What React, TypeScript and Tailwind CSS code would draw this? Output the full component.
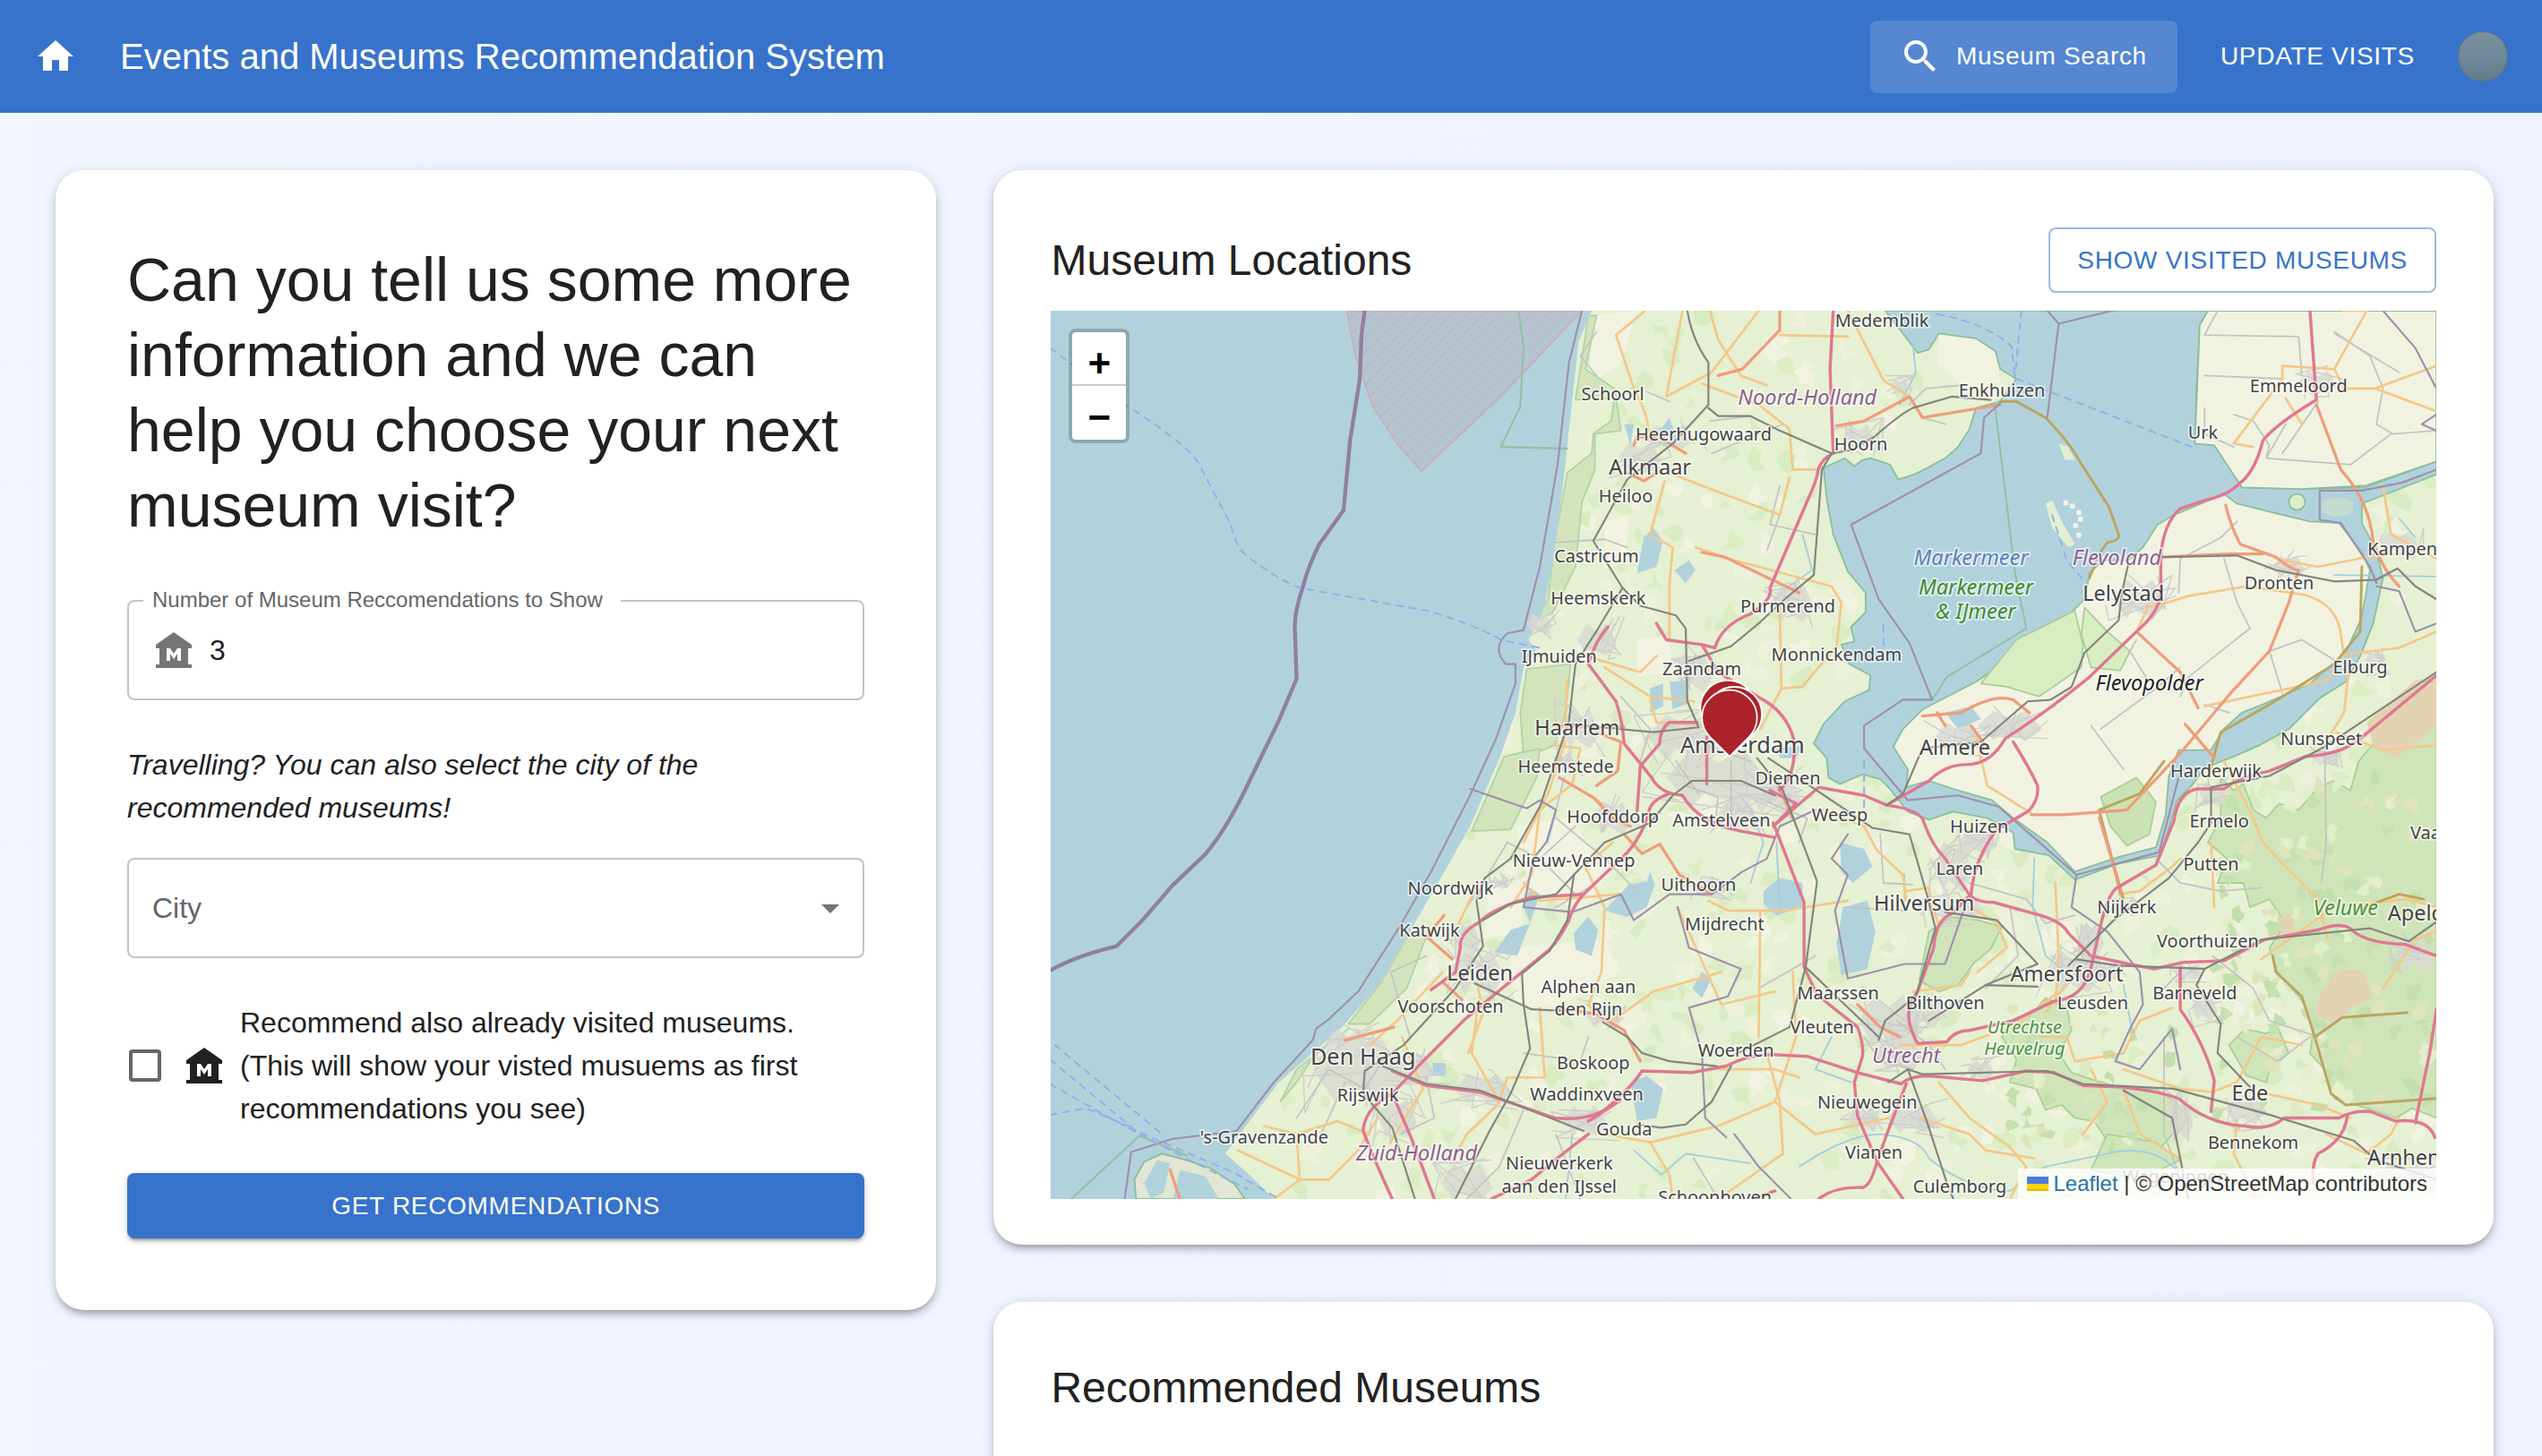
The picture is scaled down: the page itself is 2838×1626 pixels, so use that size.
import { useId, useState } from "react";
import type { ReactNode } from "react";

const SANS = "font-['Liberation_Sans',Arial,sans-serif]";

type IconProps = { d: string; className?: string };

function Icon({ d, className = "" }: IconProps) {
  return (
    <svg viewBox="0 0 24 24" aria-hidden="true" className={`size-12 shrink-0 fill-current ${className}`}>
      <path d={d} />
    </svg>
  );
}

const HOME = "M10 20v-6h4v6h5v-8h3L12 3 2 12h3v8z";
const SEARCH =
  "M15.5 14h-.79l-.28-.27C15.41 12.59 16 11.11 16 9.5 16 5.91 13.09 3 9.5 3S3 5.91 3 9.5 5.91 16 9.5 16c1.61 0 3.09-.59 4.23-1.57l.27.28v.79l5 4.99L20.49 19l-4.99-5zm-6 0C7.01 14 5 11.99 5 9.5S7.01 5 9.5 5 14 7.01 14 9.5 11.99 14 9.5 14z";
const MUSEUM =
  "M22 11V9L12 2 2 9v2h2v9H2v2h20v-2h-2v-9h2zm-6 7h-2v-4l-2 3-2-3v4H8v-7h2l2 3 2-3h2v7z";
const ARROW_DOWN = "M7 10l5 5 5-5z";

function Card({ children, className = "" }: { children: ReactNode; className?: string }) {
  return (
    <section
      className={`rounded-[32px] bg-white shadow-[0_6px_6px_-4px_rgba(0,0,0,0.2),0_6px_8px_rgba(0,0,0,0.14),0_2px_16px_rgba(0,0,0,0.12)] ${className}`}
    >
      {children}
    </section>
  );
}

function TopBar() {
  return (
    <header className="flex h-[126px] shrink-0 items-center bg-[#3873cb] pr-[38px] pl-[38px] text-white">
      <a href="#home" aria-label="Home">
        <Icon d={HOME} />
      </a>
      <h1 className="ml-12 flex-1 text-[40px] leading-[64px]">Events and Museums Recommendation System</h1>
      <label className="flex h-[81px] items-center gap-4 rounded-lg bg-white/15 px-8">
        <Icon d={SEARCH} />
        <input
          type="text"
          aria-label="Museum Search"
          placeholder="Museum Search"
          className="w-[215px] bg-transparent text-[28px] tracking-wide outline-none placeholder:text-white"
        />
      </label>
      <button type="button" className="mr-8 ml-8 px-4 text-[28px] tracking-wide uppercase">
        Update visits
      </button>
      <button
        type="button"
        aria-label="Account"
        className="size-14 rounded-full border border-[#5f7684] bg-linear-to-b from-[#7d909b] via-[#6d8a9c] to-[#667a87]"
      />
    </header>
  );
}

function PreferencesForm() {
  const id = useId();
  const [count, setCount] = useState("3");
  const [includeVisited, setIncludeVisited] = useState(false);

  return (
    <Card className="p-20 text-[32px] leading-[48px]">
      <form onSubmit={(e) => e.preventDefault()}>
        <h2 className="text-[68px] leading-[84px]">
          Can you tell us some more information and we can help you choose your next museum visit?
        </h2>

        <div className="relative mt-16 flex h-28 items-center gap-4 rounded-lg border-2 border-[#c4c4c4] px-[26px]">
          <label
            htmlFor={`${id}-count`}
            className="absolute -top-4 left-4 bg-white pr-5 pl-2.5 text-[24px] leading-[28px] text-[#666]"
          >
            Number of Museum Reccomendations to Show
          </label>
          <Icon d={MUSEUM} className="text-[#757575]" />
          <input
            id={`${id}-count`}
            type="text"
            inputMode="numeric"
            value={count}
            onChange={(e) => setCount(e.target.value)}
            className="w-full min-w-0 flex-1 outline-none"
          />
        </div>

        <p className="mt-12 italic">Travelling? You can also select the city of the recommended museums!</p>

        <div className="relative mt-8 h-28">
          <select
            aria-label="City"
            defaultValue=""
            className="h-full w-full appearance-none rounded-lg border-2 border-[#c4c4c4] px-[26px] text-[#666] outline-none"
          >
            <option value="">City</option>
          </select>
          <Icon d={ARROW_DOWN} className="pointer-events-none absolute top-8 right-[14px] text-[#757575]" />
        </div>

        <label className="mt-12 flex items-center">
          <input
            type="checkbox"
            checked={includeVisited}
            onChange={(e) => setIncludeVisited(e.target.checked)}
            className="ml-0.5 size-9 shrink-0 appearance-none rounded border-4 border-[#666] checked:bg-[#3873cb]"
          />
          <Icon d={MUSEUM} className="ml-6" />
          <span className="ml-4">
            Recommend also already visited museums. (This will show your visted musuems as first recommendations
            you see)
          </span>
        </label>

        <button
          type="submit"
          className="mt-12 h-[73px] w-full rounded-lg bg-[#3873cb] text-[28px] tracking-wide text-white uppercase shadow-[0_6px_2px_-4px_rgba(0,0,0,0.2),0_4px_4px_rgba(0,0,0,0.14),0_2px_10px_rgba(0,0,0,0.12)]"
        >
          Get recommendations
        </button>
      </form>
    </Card>
  );
}

/* ---------- map geometry ---------- */

const MAINLAND =
  "982,192 974,211 970,247 965,293 959,342 952,378 943,395 948,402 940,412 935,440 926,466 907,510 889,542 871,573 853,605 829,633 811,649 789,668 768,696 756,712 772,726 786,740 1503,740 1503,192";
const SOUTH_ISLAND = "701,740 700,728 706,717 717,712 732,716 747,721 762,731 768,740";
const LAKES =
  "1163,192 1174,206 1183,218 1190,216 1196,206 1219,209 1231,217 1234,228 1244,234 1234,248 1219,252 1215,265 1208,276 1200,283 1189,289 1181,293 1171,296 1166,287 1154,283 1149,284 1144,288 1138,283 1125,289 1127,308 1131,330 1140,353 1151,366 1151,378 1142,387 1144,396 1136,398 1141,410 1154,417 1153,426 1138,433 1125,447 1119,459 1127,468 1128,480 1135,484 1149,478 1160,481 1166,487 1177,501 1190,506 1205,501 1226,505 1242,514 1243,524 1264,528 1280,543 1307,533 1333,528 1343,494 1352,485 1360,474 1378,467 1394,460 1412,450 1431,431 1447,421 1456,405 1464,385 1470,357 1466,340 1457,323 1457,311 1503,293 1503,285 1459,301 1419,302 1383,301 1375,288 1366,275 1354,274 1355,240 1357,201 1362,192";
const FLEVOPOLDER =
  "1372,305 1380,311 1400,316 1425,322 1443,323 1457,341 1462,352 1457,381 1447,403 1425,422 1398,434 1383,440 1372,450 1364,463 1344,463 1338,479 1336,503 1330,523 1307,529 1280,538 1263,520 1242,505 1229,494 1205,487 1190,482 1176,486 1177,475 1168,461 1174,450 1186,438 1219,421 1246,402 1274,382 1286,370 1289,354 1297,346 1313,346 1322,338 1331,324 1341,318";
const NORTH_POLDER = "1362,192 1357,201 1354,274 1366,275 1383,301 1419,302 1459,300 1503,285 1503,192";

const FORESTS = [
  "1370,480 1378,488 1384,484 1390,500 1398,505 1406,496 1418,500 1430,486 1440,482 1450,488 1455,470 1470,452 1480,440 1503,420 1503,690 1488,684 1478,690 1460,684 1440,678 1434,660 1425,650 1428,630 1418,615 1405,600 1400,585 1410,570 1400,555 1388,560 1384,545 1368,545 1374,530 1362,520 1370,505",
  "1235,640 1240,630 1255,624 1262,616 1275,622 1278,636 1270,650 1278,662 1290,666 1310,672 1330,672 1342,680 1350,690 1340,700 1330,712 1318,702 1300,704 1292,692 1280,690 1272,682 1262,685 1256,672 1240,668 1244,654",
  "1190,575 1204,566 1220,568 1235,572 1228,586 1218,594 1208,608 1196,612 1184,605",
  "1296,492 1318,480 1330,495 1326,515 1312,522 1302,510",
  "1375,645 1385,635 1398,638 1405,634 1412,650 1400,660 1398,668 1386,664",
  "1265,528 1285,515 1305,520 1308,530 1281,538",
  "1286,375 1300,390 1314,402 1308,414 1290,412 1284,392",
  "1244,395 1280,377 1285,398 1284,412 1258,430 1238,424 1222,422",
  "1300,700 1330,705 1345,716 1320,728 1290,722",
];
const DUNES = [
  "972,247 996,246 994,260 983,268 982,280 967,292 960,330 955,370 947,384 958,378 972,350 976,310 984,290 984,268 1000,266 996,240 978,228 985,195 980,195",
  "942,413 969,410 966,440 959,460 940,468 938,440",
  "928,467 950,462 948,480 932,512 908,513",
  "870,575 880,578 868,610 845,632 832,632 853,605",
  "832,635 812,650 800,668 790,680 800,660",
];
const HEATHS = [
  "1432,612 1444,598 1458,600 1464,616 1450,622 1440,632 1428,626",
  "1460,446 1490,420 1503,418 1503,448 1478,468 1464,460",
  "1406,566 1413,564 1416,574 1408,582",
];
const FIELDS = [
  "985,195 1010,192 1000,225 978,240",
  "990,322 1005,318 1003,345 990,352",
  "935,510 970,505 992,540 978,562 944,552",
  "920,540 940,548 938,575 915,580",
  "1196,206 1219,209 1231,217 1234,236 1215,242 1195,225",
  "1010,395 1030,392 1032,415 1010,418",
  "930,585 990,580 1000,600 960,622 935,620",
];

const TOWNS: [number, number, number, number][] = [
  [1012, 282, 13, 9], [1030, 270, 16, 7], [1147, 270, 10, 8], [1172, 238, 6, 4], [1430, 236, 12, 7],
  [1106, 372, 13, 12], [985, 395, 12, 10], [950, 385, 8, 6], [975, 450, 12, 12], [965, 472, 8, 7],
  [1060, 480, 32, 18], [1040, 455, 24, 14], [1045, 415, 12, 12], [1095, 490, 16, 12], [1072, 503, 12, 10],
  [995, 505, 12, 10], [912, 600, 16, 14], [905, 580, 8, 10], [838, 660, 28, 20], [870, 660, 16, 9],
  [915, 672, 18, 9], [862, 690, 12, 12], [832, 645, 14, 10], [990, 627, 12, 7], [978, 692, 14, 9],
  [905, 730, 16, 12], [1205, 535, 12, 16], [1220, 520, 12, 8], [1208, 560, 16, 8], [1165, 630, 18, 16],
  [1172, 650, 14, 12], [1188, 625, 10, 10], [1180, 690, 16, 9], [1150, 690, 10, 8], [1280, 600, 16, 13],
  [1290, 580, 8, 10], [1320, 370, 16, 12], [1412, 350, 10, 7], [1240, 448, 20, 9], [1208, 455, 14, 9],
  [1480, 335, 12, 7], [1385, 685, 12, 9], [1345, 690, 8, 14], [1360, 622, 8, 8], [1350, 600, 8, 5],
  [1490, 590, 12, 10], [1485, 725, 18, 8], [1312, 560, 9, 6], [1365, 490, 8, 8], [1435, 468, 8, 5],
  [1465, 408, 6, 6], [1222, 660, 8, 6], [925, 545, 6, 4], [1055, 548, 10, 6], [1300, 600, 8, 5],
];

const PONDS = [
  "1005,546 1016,544 1018,538 1021,546 1016,560 1004,566 990,562",
  "1088,550 1098,542 1112,545 1112,560 1096,565 1088,558",
  "1135,520 1150,524 1155,535 1143,545 1136,538",
  "1137,560 1152,556 1157,575 1152,598 1136,602 1133,582",
  "971,576 980,566 986,574 982,590 972,586",
  "1006,668 1016,664 1026,672 1022,690 1010,692",
  "1014,332 1020,326 1026,334 1022,350 1010,354",
  "1018,425 1026,422 1026,436 1018,440",
  "1030,421 1040,420 1042,434 1032,438",
  "1044,610 1050,600 1056,604 1050,616",
  "884,656 892,656 892,664 884,664",
  "1033,352 1042,346 1046,352 1040,360",
  "1200,440 1216,436 1222,444 1208,450",
  "1096,462 1112,460 1108,468 1098,468",
  "1024,266 1030,258 1034,270 1026,276",
  "1002,262 1008,262 1006,275",
  "714,716 722,718 718,736 710,740 706,730",
  "728,722 744,726 752,740 724,740",
  "944,548 950,552 944,570 940,560",
  "932,574 944,570 936,590 922,588",
];

const HIGHWAYS = [
  "M1425,192 L1429,247 Q1404,262 1396,272 Q1391,292 1381,299 Q1374,306 1360,309 L1345,314 Q1334,324 1333,345 L1333,366 Q1332,378 1319,389 L1289,418 Q1262,440 1237,456 Q1228,472 1213,472 Q1200,472 1190,482 L1164,497",
  "M1131,192 L1129,228 L1131,280 Q1122,284 1121,294 L1119,300 L1092,363 Q1094,370 1080,379 Q1062,386 1058,400 L1050,398 L1028,395 L1022,385",
  "M1050,398 L1060,415 L1086,431 Q1103,440 1107,458 Q1108,478 1098,488",
  "M1047,446 L1030,446 Q1024,450 1024,459 L1012,473 L1010,501",
  "M992,387 Q984,396 980,410 L997,433 Q1001,445 1002,459 L1019,480 Q1024,490 1038,491 Q1048,508 1074,513 L1095,517",
  "M1053,455 L1053,484",
  "M1030,490 Q1018,494 1017,502 Q1012,520 998,532 L977,552 Q970,560 968,568 Q962,580 956,586 L939,600 Q912,622 904,629 L877,656 L859,675 L871,703 L885,740",
  "M977,552 L944,554 Q922,560 913,569 Q900,576 901,585 L898,600 L883,611",
  "M859,675 Q842,684 841,698 Q848,716 859,740",
  "M859,661 L880,670 L913,674 L959,690 Q978,692 990,685 Q1006,672 1013,661 L1044,662 L1065,658 Q1080,650 1095,651 L1115,652 L1146,662 L1173,669 Q1178,664 1190,664 L1223,667 L1250,661 L1267,662 L1285,670 L1310,671 Q1334,674 1344,678 Q1362,694 1385,695 Q1400,698 1409,690 L1443,690 Q1452,685 1462,686 L1478,692 Q1498,690 1502,702",
  "M1094,508 L1113,557 L1113,597 L1121,614 L1146,634 Q1150,645 1149,652 L1144,668 L1146,689 L1158,717 Q1154,732 1149,733 Q1132,732 1122,740",
  "M1176,669 L1164,700 L1158,717 L1174,740",
  "M1092,488 L1108,496 L1094,510 L1122,486 L1150,491 L1164,497 Q1186,500 1187,508 Q1192,522 1200,530 L1214,551 Q1218,557 1230,557 L1255,564 Q1272,568 1276,576 L1290,590 L1313,595 L1329,598 L1347,594 L1372,593 L1397,580 L1430,574 Q1446,568 1452,575 Q1460,582 1484,583 L1503,590",
  "M1242,458 Q1252,474 1257,485 Q1258,494 1251,501 L1232,512 Q1218,530 1216,552 L1204,564 Q1194,568 1193,585 L1183,612 Q1172,625 1183,644 L1201,643 Q1206,636 1215,636 L1242,630 L1267,618 Q1286,616 1290,597 L1295,575 Q1300,552 1306,548 L1330,534 L1341,507 Q1344,488 1356,487 L1372,487 Q1380,480 1400,476 L1422,467 Q1444,466 1456,456 L1503,417",
  "M1345,597 L1345,623 Q1360,644 1366,667 L1364,686 M1503,623 L1499,649 L1490,693 M1448,689 Q1446,704 1430,712 Q1426,718 1427,730",
  "M980,700 Q960,715 945,728 L920,740 M980,692 L1000,679",
  "M1082,740 L1095,735",
];

const TRUNKS = [
  "M1429,250 L1444,290 Q1462,310 1464,335 Q1470,352 1480,362",
  "M1373,312 Q1376,325 1382,336 L1404,344 Q1414,352 1418,352 L1412,372 L1400,402 L1376,428 L1345,465 L1312,500 L1273,503 L1253,503",
  "M1334,344 L1375,342 L1396,342",
  "M1318,390 L1345,415 L1356,437 M1348,447 L1366,468",
  "M1295,505 Q1306,540 1308,552",
  "M1098,192 L1098,204 L1075,228 L1060,232",
  "M1133,263 L1150,260 L1178,245 L1186,258 L1234,250",
  "M1008,275 L1010,270 L1024,270 L1040,280 M1004,292 L1014,297 L1026,290",
  "M1050,341 L1064,344 L1110,366",
  "M958,448 L1002,449 M962,480 L984,493 L996,506 L1006,510",
  "M985,452 L1000,458 L998,476 L985,485",
  "M1002,515 L1013,527 L1024,521 L1036,540 L1056,552",
  "M891,565 L880,578 L896,592 M890,606 L902,617",
  "M830,642 L845,638 L860,634 M960,622 L985,626 L1002,636 L1012,655",
  "M1186,442 L1210,440 Q1230,428 1242,432 L1252,440 M1195,440 L1200,448",
  "M1146,620 L1160,634 L1172,640 M1216,448 L1226,462",
  "M722,722 L728,740 M1096,483 L1106,505",
];

const ROADS = [
  "M1015,192 L997,207 L1008,240 Q1020,262 1016,272 M1038,192 L1028,245 L1056,230 L1085,192",
  "M1055,192 L1060,210 L1074,232 L1090,238 M1050,237 L1085,250 L1104,265 L1106,290 L1122,290 M1104,295 L1098,318 L1050,300 L1030,292",
  "M1027,297 L1018,330 L1032,338 L1030,360 L1030,395 M1140,192 L1162,235 L1178,245 M1098,207 L1140,208",
  "M1046,338 L1070,346 L1130,362 L1136,372 L1133,400 M1098,375 L1099,425 L1112,424 L1132,400 M1099,425 L1086,450",
  "M1445,192 L1460,192 L1440,228 L1408,226 L1408,234 L1378,274 L1390,276 M1440,228 L1446,240 L1465,240 L1503,226 M1465,240 L1503,254 M1410,246 L1420,262",
  "M1334,373 L1350,368 L1386,362 L1420,367 Q1442,372 1444,392 L1446,404 L1436,420 L1360,436 M1319,388 L1325,375 L1334,373",
  "M1404,345 L1430,350 L1455,345 L1478,342 M1470,300 L1475,330 L1503,345 M1446,404 L1480,400 L1503,390 M1450,405 L1446,440 L1436,456",
  "M1441,452 L1470,463 L1503,460 M1372,470 L1390,505 L1396,520 L1410,535 L1430,555 L1436,580 M1366,560 L1364,520",
  "M1219,455 L1226,485 L1253,502 M1268,545 L1270,590 M1216,560 L1232,570 L1238,585 L1220,600",
  "M1176,550 L1190,548 L1192,560 L1196,570 M1125,500 L1150,510 L1158,525 L1174,540 L1176,556",
  "M1054,556 L1066,562 L1100,562 L1140,556 M1086,562 L1085,640 M1035,560 L1062,620 L1095,612",
  "M967,420 L965,460 L955,490 L940,520 M978,405 L1012,415 L1022,405 M990,412 L1018,430 L1045,433",
  "M1018,432 L1022,446 L1060,448 M958,460 L975,462 L970,484 L950,500 L945,540 L932,560",
  "M995,520 L978,535 L990,560 L988,600 L980,620 L985,626 M912,545 L900,570 M940,545 L950,556 L1000,552",
  "M950,622 L953,665 L930,665 L924,682 L905,700 L895,718 M912,620 L908,650 L925,680 M865,640 L878,672 L858,705",
  "M780,695 L800,700 L825,692 L845,700 M800,700 L802,728 L820,728 L838,710 L850,690 M764,710 L802,728 L786,740",
  "M912,610 L915,625 L906,650 M845,645 L862,630 L890,600 M995,630 L1020,612 L1062,600",
  "M990,700 L1018,705 L1030,725 L1032,740 M1018,705 L1060,695 L1095,680 L1120,700 L1165,690 M1090,650 L1098,680 L1100,712 L1060,740",
  "M1095,680 L1108,640 L1106,600 M1060,660 L1095,660 L1110,665 M1185,690 L1215,700 L1225,710 L1255,715",
  "M1196,668 L1215,690 L1240,708 L1250,720 L1240,740 M1258,640 L1275,640 L1280,655 L1310,650 L1320,630 L1340,622",
  "M1172,645 L1210,645 L1245,632 L1270,612 M1180,612 L1210,608 L1215,600 M1270,590 L1268,620",
  "M1310,660 L1345,672 L1365,674 L1380,668 L1395,640 L1420,645 M1398,675 L1430,682 L1450,690 M1380,692 L1378,712 L1392,740",
  "M1290,660 L1300,680 L1285,700 M1310,672 L1320,700 L1345,715 M1470,610 L1490,580 L1503,575 M1395,592 L1440,560 L1485,555 L1503,560",
  "M1308,552 L1320,550 L1340,535 L1345,530 M1280,600 L1262,625 M1435,700 L1460,712 L1475,700 L1480,690",
];

const FOREST_ROADS = [
  "M1234,248 L1244,248 L1262,258 Q1278,275 1283,285 L1301,313 L1307,330 Q1308,334 1300,335 L1295,342 L1289,357",
  "M1295,500 Q1300,520 1310,555 M1295,500 L1320,490 L1335,470",
  "M1457,350 L1456,390 L1440,410 L1400,435 L1370,452 L1362,480",
  "M1402,590 L1404,600 L1420,615 L1428,640 L1438,675 L1447,682 L1503,678 M1428,640 L1445,628 L1485,625 M1458,560 L1480,552 L1495,555",
];

const MINOR = [
  "M1368,192 L1360,207 L1418,208 L1420,232 M1360,232 L1408,234 M1360,252 L1360,268 L1378,276 M1440,205 L1462,220 L1470,240 L1466,262 L1476,268 L1503,266",
  "M1378,256 L1390,260 L1400,275 L1398,283 L1450,287 L1475,268 M1440,206 L1480,230 M1408,280 L1430,248 M1398,283 L1410,262",
  "M1344,366 L1345,345 L1370,332 L1380,322 M1372,345 L1380,372 L1388,388 L1350,418 L1345,430 M1400,402 L1420,395 L1444,410 M1400,402 L1408,428",
  "M1318,395 L1314,402 L1325,420 M1296,450 L1330,425 L1345,412 M1290,448 L1310,475 M1360,435 L1375,440",
  "M1055,260 L1080,257 M1098,318 L1090,340 M1120,330 L1092,324 L1098,300 M1178,250 L1188,240 L1210,238 M1186,258 L1200,262",
  "M960,335 L990,333 L1004,338 M985,205 L975,220 L985,232 M1056,280 L1100,262 M1016,242 L1030,248",
  "M905,560 L915,545 L930,520 L950,530 L975,555 M960,505 L990,530 L1010,550 M950,530 L972,510 M960,560 L985,545",
  "M870,640 L858,600 L880,590 M800,690 L820,660 L842,672 L856,650 M815,700 L830,668 M864,700 L885,690 L880,665",
  "M940,650 L975,655 L980,640 M940,685 L925,720 L905,740 M960,700 L975,740 M1045,715 L1060,740",
  "M1120,590 L1085,610 M1138,560 L1175,562 L1175,540 M1160,515 L1162,545 L1180,546 M1215,540 L1225,525",
  "M1215,545 L1250,555 L1262,570 L1280,565 M1240,560 L1245,590 L1225,610 M1330,530 L1345,545 L1370,550 L1395,548 M1434,460 L1435,520 L1432,545",
  "M1380,640 L1405,655 L1425,640 M1365,590 L1390,610 L1400,630 L1430,640 M1345,600 L1330,615 M1335,640 L1335,700 L1350,740",
  "M1040,485 L1060,492 L1058,510 M1068,470 L1068,510 M1052,460 L1080,470 M1090,495 L1115,505 L1110,520 M1034,470 L1048,490",
  "M1000,430 L1018,450 L1012,470 M1046,405 L1040,425 M1150,640 L1160,655 L1180,660 M1170,630 L1190,645 L1200,660",
];

const RAILS = [
  "M1041,192 Q1044,210 1054,224 L1054,250 L1032,274 L1004,296 L983,334 L1001,363 L1012,374 L1034,380 L1040,388 L1041,433 L1048,449 L1020,452 L998,450 L968,447",
  "M1054,252 L1060,257 L1080,257 L1096,265 L1130,280 L1124,290 L1119,355 L1101,370 L1086,384 L1068,399 L1042,408",
  "M1130,280 L1142,278 L1156,270 Q1172,256 1180,252 L1204,245 L1228,247",
  "M1001,363 L986,388 L972,410 L968,445 L962,463 L950,498 L932,530 L916,542 L911,556 L915,584 L898,610 L866,645 L842,661 L841,675 L859,696 L873,740",
  "M1095,491 L1074,482 L1044,482 L1032,491 L1018,508 L990,520 L971,540 L960,552 L932,558 L915,568",
  "M971,540 L967,568 L956,587 L939,601 L940,620 L944,647 L932,675 L919,698 L898,740",
  "M1084,468 L1100,488 L1121,544 L1114,597 L1159,640 M1114,597 L1104,634 L1068,652 M1165,668 L1177,660 L1186,663 L1263,661 L1285,669 L1341,672 L1400,688 L1452,704 L1466,716 L1503,728",
  "M1177,660 L1189,693 L1201,730 L1205,740 M1068,658 L1056,680 L1040,694 L1025,696 L1010,694",
  "M853,658 L880,669 L913,673 L977,698 M910,607 L945,623 L965,624 M989,631 L1004,640 L1013,650 L1030,655 L1059,658",
  "M1091,468 L1121,488 L1155,511 L1178,515 L1189,553 L1194,573 L1182,615 L1163,630 L1159,642",
  "M1200,563 L1232,568 L1257,595 L1225,608 L1190,630",
  "M1257,609 L1225,608 M1280,592 L1307,596 L1360,598 L1395,580 L1462,573 L1486,581 L1503,569",
  "M1276,596 L1304,568 L1338,542 L1356,520 L1364,508 L1364,486 L1400,479 L1434,461 L1503,415",
  "M1360,598 L1355,608 L1370,632 L1368,650 L1388,671 M1310,673 L1340,690 L1350,740",
  "M1164,497 L1174,490 L1186,462 L1222,458 L1251,433 L1265,432 L1278,424 L1286,403 L1307,383 L1309,366 L1313,348 M1334,344 L1380,343 L1404,352 L1440,359 L1466,358 L1479,351 L1490,362 L1503,370",
];

const BORDERS = [
  "M976,192 L968,224 L961,287 L950,350 L940,389 L930,391 Q920,400 929,410 L935,410 L935,422 L923,456 L907,491 L883,538 L863,573 L838,612 L820,629 L812,635 L810,642 L786,668 L763,698 L723,703 L698,711 L694,740",
  "M1234,249 L1224,258 L1222,280 L1142,324 L1159,370 L1178,397 L1192,432 L1174,432 L1150,448 L1150,462 L1177,494 L1208,491 L1233,498 L1281,540 L1332,526 L1344,480",
  "M1263,192 L1270,200 L1263,258 M1270,200 L1307,191 M1503,290 L1482,298 L1457,303 L1431,303 L1431,321 L1444,323 L1462,350 L1466,360",
  "M907,487 L942,499 L950,494 L960,500 L954,520 L946,530 L940,560 L970,563 L1000,552 L1008,568 L1030,552 L1056,552 L1075,538 L1090,530 L1098,510 L1120,500",
  "M1035,560 L1042,585 L1074,598 L1066,615 L1042,622 L1050,650 L1052,690 L1065,702",
  "M1140,515 L1130,530 L1140,540 L1132,562 L1140,604 L1175,595 L1200,595 L1212,560 M1281,540 L1278,560 L1300,575 L1320,600 L1322,620 L1314,635 L1305,655 L1320,660 L1340,635 L1345,660",
  "M1466,362 L1480,365 L1490,390 L1503,385 M1470,192 L1490,215 L1503,240 M1503,256 L1494,262 L1503,266 M1070,700 L1085,720 L1105,740",
];
const RESERVES = [
  "M1231,253 L1243,353 L1250,388 L1201,418 L1192,432",
  "M937,192 L940,215 L938,251 L926,276 L967,277",
  "M661,740 L703,701 L732,713",
];
const FERRIES = [
  "M648,215 L696,251 Q738,278 741,289 L759,323 Q763,338 768,342 Q785,356 802,363 L880,377 Q906,384 926,395 L950,400",
  "M648,654 L701,698 L762,724 L789,740 M651,645 L717,700 M648,669 L683,689 L726,712 L770,734 M648,688 L670,684 L701,697",
  "M1244,234 L1352,276 M1195,194 Q1226,200 1241,214 L1243,234 M1247,192 L1243,234 M1266,318 L1275,346 L1286,359 M1162,386 L1162,398 M1150,470 L1150,500",
];
const CREEKS = [
  "M1255,530 L1254,560 L1262,590 L1275,600 M1110,720 Q1140,700 1160,700 Q1185,702 1190,715 Q1215,735 1240,735 L1262,720 L1300,712 Q1330,705 1345,725",
  "M1008,710 L1025,725 L1040,712 L1080,718 M1098,560 L1096,520 M955,520 L965,480 M1130,640 L1120,660 L1142,668",
  "M1180,212 L1182,230 L1172,250 M1112,330 L1118,352 L1104,362 M1080,500 L1088,520 L1080,545 M970,700 L966,740",
  "M1440,355 L1503,356 M1310,608 L1316,640 M1480,320 L1490,332",
];

// [text, x, y, size]
type Place = [string, number, number, number];
const PLACES: Place[] = [
  ["Medemblik", 1161, 202, 11], ["Schoorl", 995, 247, 11], ["Enkhuizen", 1235, 245, 11],
  ["Emmeloord", 1418, 242, 11], ["Heerhugowaard", 1051, 272, 11], ["Hoorn", 1148, 278, 11],
  ["Urk", 1359, 271, 11], ["Alkmaar", 1018, 293, 13], ["Heiloo", 1003, 310, 11],
  ["Castricum", 985, 347, 11], ["Heemskerk", 986, 373, 11], ["Purmerend", 1103, 378, 11],
  ["Lelystad", 1310, 371, 13], ["Dronten", 1406, 364, 11], ["Kampen", 1482, 343, 11],
  ["IJmuiden", 962, 409, 11], ["Monnickendam", 1133, 408, 11], ["Zaandam", 1050, 417, 11],
  ["Elburg", 1456, 416, 11], ["Haarlem", 973, 454, 13], ["Amsterdam", 1075, 465, 14],
  ["Almere", 1206, 466, 13], ["Nunspeet", 1432, 460, 11], ["Heemstede", 966, 477, 11],
  ["Diemen", 1103, 484, 11], ["Harderwijk", 1367, 480, 11], ["Hoofddorp", 995, 508, 11],
  ["Amstelveen", 1062, 510, 11], ["Weesp", 1135, 507, 11], ["Huizen", 1221, 514, 11],
  ["Ermelo", 1369, 511, 11], ["Vaassen", 1508, 518, 11], ["Nieuw-Vennep", 971, 535, 11],
  ["Laren", 1209, 540, 11], ["Putten", 1364, 537, 11], ["Noordwijk", 895, 552, 11],
  ["Uithoorn", 1048, 550, 11], ["Hilversum", 1187, 562, 13], ["Nijkerk", 1312, 564, 11],
  ["Apeldoorn", 1505, 568, 13], ["Katwijk", 882, 578, 11], ["Mijdrecht", 1064, 574, 11],
  ["Voorthuizen", 1362, 585, 11], ["Leiden", 913, 605, 13], ["Amersfoort", 1275, 606, 13],
  ["Alphen aan", 980, 613, 11], ["den Rijn", 980, 627, 11], ["Maarssen", 1134, 617, 11],
  ["Bilthoven", 1200, 623, 11], ["Leusden", 1291, 623, 11], ["Barneveld", 1354, 617, 11],
  ["Voorschoten", 895, 625, 11], ["Vleuten", 1124, 638, 11], ["Den Haag", 841, 657, 14],
  ["Boskoop", 983, 660, 11], ["Woerden", 1071, 652, 11], ["Rijswijk", 844, 680, 11],
  ["Waddinxveen", 979, 679, 11], ["Nieuwegein", 1152, 684, 11], ["Ede", 1388, 679, 13],
  ["Gouda", 1002, 701, 11], ["'s-Gravenzande", 780, 706, 11], ["Vianen", 1156, 715, 11],
  ["Bennekom", 1390, 709, 11], ["Nieuwerkerk", 962, 722, 11], ["aan den IJssel", 962, 736, 11],
  ["Schoonhoven", 1058, 743, 11], ["Culemborg", 1209, 736, 11], ["Arnhem", 1485, 719, 13],
  ["Wageningen", 1342, 730, 11],
];

type Area = [string, number, number, number, string];
const AREAS: Area[] = [
  ["Noord-Holland", 1115, 250, 13, "#8d618b"],
  ["Flevoland", 1306, 349, 13, "#8d618b"],
  ["Zuid-Holland", 874, 716, 13, "#8d618b"],
  ["Utrecht", 1176, 656, 13, "#8d618b"],
  ["Markermeer", 1216, 349, 13, "#5b80bd"],
  ["Markermeer", 1219, 367, 13, "#3f8a2c"],
  ["& IJmeer", 1219, 382, 13, "#3f8a2c"],
  ["Flevopolder", 1326, 426, 13, "#222"],
  ["Utrechtse", 1249, 638, 11, "#4b9440"],
  ["Heuvelrug", 1249, 651, 11, "#4b9440"],
  ["Veluwe", 1447, 565, 13, "#4b9440"],
];

const PINS: [number, number][] = [
  [1066, 461],
  [1070, 465],
  [1067, 467],
];

function makeRandom(seed: number) {
  let s = seed;
  return () => {
    s = (s * 16807) % 2147483647;
    return s / 2147483647;
  };
}

type Patch = { points: string; tone: number };

// small patches of meadow and grove so that the land does not look flat
function makePatches(n: number, seed: number, box: [number, number, number, number], radius: number): Patch[] {
  const rnd = makeRandom(seed);
  const [left, top, width, height] = box;
  return Array.from({ length: n }, () => {
    const x = left + rnd() * width;
    const y = top + rnd() * height;
    const pts = Array.from({ length: 7 }, (_, i) => {
      const a = (i / 7) * Math.PI * 2;
      const r = 1 + rnd() * radius;
      return `${Math.round(x + Math.cos(a) * r)},${Math.round(y + Math.sin(a) * r)}`;
    });
    return { points: pts.join(" "), tone: Math.floor(rnd() * 4) };
  });
}

// short street stubs around every town
function makeStreets() {
  const rnd = makeRandom(91);
  return TOWNS.flatMap(([x, y, rx, ry]) =>
    Array.from({ length: 5 }, () => {
      const spot = () =>
        `${Math.round(x + (rnd() - 0.5) * rx * 3)},${Math.round(y + (rnd() - 0.5) * ry * 3)}`;
      return `M${spot()} L${spot()} L${spot()}`;
    })
  );
}

const PATCHES = makePatches(900, 17, [790, 192, 713, 548], 8);
const GROVES = makePatches(130, 53, [1365, 480, 138, 210], 6);
const HILLS = makePatches(40, 29, [1240, 622, 100, 90], 5);
const STREETS = makeStreets();
const TONES = ["#dcedc4", "#eef2da", "#d9ebc2", "#f1f2e0"];
const GROVE_TONES = ["#c2dfac", "#dfe4ba", "#e3eecb", "#c6e0b1"];

function Lines({ paths, stroke, width, dash }: { paths: string[]; stroke: string; width: number; dash?: string }) {
  return (
    <g fill="none" stroke={stroke} strokeWidth={width} strokeDasharray={dash} strokeLinejoin="round" strokeLinecap="round">
      {paths.map((d) => (
        <path key={d} d={d} />
      ))}
    </g>
  );
}

function Shapes({ list, fill, stroke }: { list: string[]; fill: string; stroke?: string }) {
  return (
    <g fill={fill} stroke={stroke} strokeLinejoin="round">
      {list.map((points) => (
        <polygon key={points} points={points} />
      ))}
    </g>
  );
}

function Patches({ list, tones }: { list: Patch[]; tones: string[] }) {
  return (
    <g>
      {list.map((p, i) => (
        <polygon key={i} points={p.points} fill={tones[p.tone]} />
      ))}
    </g>
  );
}

function BaseMap() {
  return (
    <svg
      viewBox="648 192 855 548"
      preserveAspectRatio="xMidYMid slice"
      role="img"
      aria-label="Map of the museums"
      className="absolute inset-0 size-full"
    >
      <defs>
        <clipPath id="land">
          <polygon points={MAINLAND} />
        </clipPath>
        <pattern id="hatch" width="7" height="7" patternUnits="userSpaceOnUse" patternTransform="rotate(45)">
          <rect width="7" height="7" fill="#b5c4cf" />
          <rect width="1" height="7" fill="#bcb8c5" />
        </pattern>
      </defs>

      <rect x="648" y="192" width="855" height="548" fill="#b1d2dd" />
      <polygon points="831,192 836,219 847,251 862,274 877,291 926,245 976,192" fill="url(#hatch)" stroke="#c9afb8" />

      <polygon points={MAINLAND} fill="#e6f0d2" />
      <polygon points={SOUTH_ISLAND} fill="#e2e6d3" stroke="#8dbd98" />
      <g clipPath="url(#land)">
        <Patches list={PATCHES} tones={TONES} />
        <Shapes list={FIELDS} fill="#f2f2e0" />
        <Shapes list={DUNES} fill="#d3e4bd" stroke="#b2d3a6" />
        <Shapes list={FORESTS} fill="#cfe5b9" stroke="#a9d09a" />
        <Patches list={GROVES} tones={GROVE_TONES} />
        <Patches list={HILLS} tones={GROVE_TONES} />
        <Shapes list={HEATHS} fill="#e4d3b2" />
      </g>
      <polygon points={LAKES} fill="#b1d2dd" stroke="#8bbf9b" strokeWidth="1" strokeLinejoin="round" />
      <polygon points={NORTH_POLDER} fill="#f1f3e0" stroke="#8bbf9b" />
      <polygon points={FLEVOPOLDER} fill="#f1f3e0" stroke="#8bbf9b" strokeLinejoin="round" />
      <Shapes list={FORESTS.slice(3, 4)} fill="#cbe3b4" stroke="#a9d09a" />
      <Shapes list={FORESTS.slice(6, 8)} fill="#d9edc2" stroke="#a9d09a" />
      <Shapes
        list={["1262,311 1266,309 1272,322 1280,336 1276,338 1266,326", "1270,274 1276,276 1280,284 1274,284"]}
        fill="#e3efd0"
      />
      <g fill="#f4f1ea">
        {[[1273, 309], [1277, 311], [1281, 315], [1282, 319], [1279, 323], [1281, 329]].map(([x, y]) => (
          <rect key={`${x}-${y}`} x={x} y={y} width="3" height="3" />
        ))}
      </g>
      <ellipse cx="1417" cy="310" rx="5" ry="5" fill="#deedc9" stroke="#8bbf9b" />
      <ellipse cx="1442" cy="313" rx="10" ry="6" fill="#c3ddcf" />

      <g fill="#d9dad3" opacity="0.85">
        {TOWNS.map(([x, y, rx, ry]) => (
          <polygon
            key={`${x}-${y}`}
            points={`${x - rx},${y} ${x - rx / 2},${y - ry} ${x},${y - ry / 2} ${x + rx / 2},${y - ry} ${x + rx},${y + ry / 4} ${x + rx / 2},${y + ry} ${x - rx / 4},${y + ry / 2} ${x - rx / 2},${y + ry}`}
          />
        ))}
      </g>
      <Shapes list={PONDS} fill="#b1d2dd" />
      <Lines paths={CREEKS} stroke="#a3cddd" width={1} />

      <Lines paths={STREETS} stroke="#cfcfcd" width={0.8} />
      <Lines paths={MINOR} stroke="#c4c4c6" width={1} />
      <Lines paths={ROADS} stroke="#f3c88a" width={1.5} />
      <Lines paths={FOREST_ROADS} stroke="#bda45e" width={1.6} />
      <Lines paths={TRUNKS} stroke="#f09c7c" width={1.8} />
      <Lines paths={RESERVES} stroke="#93c0a6" width={1.2} />
      <Lines paths={BORDERS} stroke="#9d91ac" width={1.2} />
      <Lines
        paths={[
          "M842,192 L840,207 L839,234 L833,272 L829,315 L814,336 Q807,350 804,362 Q798,380 799,390 L800,419 L789,445 L771,482 Q758,510 744,527 L723,547 Q712,560 704,569 L689,584 Q664,590 648,599",
        ]}
        stroke="#917fa0"
        width={2.4}
      />
      <Lines paths={FERRIES} stroke="#93b0e6" width={1.1} dash="4 4" />
      <Lines paths={HIGHWAYS} stroke="#df7890" width={1.9} />
      <Lines paths={RAILS} stroke="#84857f" width={1.2} />

      <g
        fontFamily="'Noto Sans', sans-serif"
        textAnchor="middle"
        stroke="#ffffff"
        strokeOpacity="0.65"
        strokeWidth="2"
        strokeLinejoin="round"
        paintOrder="stroke"
      >
        {PLACES.map(([name, x, y, size]) => (
          <text key={name} x={x} y={y} fontSize={size} fill="#444">
            {name}
          </text>
        ))}
        {AREAS.map(([name, x, y, size, fill]) => (
          <text key={`${name}-${y}`} x={x} y={y} fontSize={size} fill={fill} fontStyle="italic">
            {name}
          </text>
        ))}
      </g>

      <g fill="#ab222b" stroke="#fff" strokeWidth="1">
        {PINS.map(([x, y]) => (
          <path
            key={`${x}-${y}`}
            transform={`translate(${x} ${y})`}
            d="M0,0 L-12,-12 A17,17 0 0 1 -17,-24 A17,17 0 0 1 17,-24 A17,17 0 0 1 12,-12 Z"
          />
        ))}
      </g>
    </svg>
  );
}

function MuseumMap() {
  return (
    <div className="relative mt-5 h-[992px] overflow-hidden bg-[#b1d2dd]">
      <BaseMap />
      <div className="absolute top-5 left-5 flex w-[68px] flex-col rounded-lg border-4 border-black/20 bg-white bg-clip-padding font-['Liberation_Mono',monospace] text-[44px] leading-none font-bold text-black">
        <button type="button" aria-label="Zoom in" className="h-[60px] border-b-2 border-[#ccc] pt-4">
          +
        </button>
        <button type="button" aria-label="Zoom out" className="h-[60px] pt-4">
          −
        </button>
      </div>
      <div className="absolute right-0 bottom-0 flex h-[34px] items-center bg-white/80 px-2.5 text-[24px] leading-[34px] text-[#333]">
        <svg viewBox="0 0 12 8" aria-hidden="true" className="mr-1.5 h-4 w-6">
          <path fill="#4c7be1" d="M0 0h12v4H0z" />
          <path fill="#ffd500" d="M0 4h12v3H0z" />
          <path fill="#e0bc00" d="M0 7h12v1H0z" />
        </svg>
        <a href="#leaflet" className="text-[#2a72a5]">
          Leaflet
        </a>
        <span className="whitespace-pre"> | © OpenStreetMap contributors</span>
      </div>
    </div>
  );
}

export default function App() {
  return (
    <div
      className={`${SANS} flex h-screen flex-col overflow-hidden bg-linear-to-r from-[#f1f6ff] to-[#eef2ff] text-[#212121]`}
    >
      <TopBar />
      <main className="grid min-h-0 flex-1 grid-cols-[37fr_63fr] items-start gap-16 overflow-y-auto pt-16 pr-[54px] pb-16 pl-[62px] [scrollbar-width:none]">
        <PreferencesForm />
        <div className="flex min-w-0 flex-col gap-16">
          <Card className="px-16 pt-16 pb-[51px]">
            <div className="flex items-center justify-between">
              <h2 className="text-[48px] leading-[64px]">Museum Locations</h2>
              <button
                type="button"
                className="h-[73px] rounded-lg border-2 border-[#9bb9e5] px-[30px] text-[28px] tracking-wide text-[#3873cb] uppercase"
              >
                Show visited museums
              </button>
            </div>
            <MuseumMap />
          </Card>
          <Card className="min-h-[480px] p-16">
            <h2 className="text-[48px] leading-[64px]">Recommended Museums</h2>
          </Card>
        </div>
      </main>
    </div>
  );
}
